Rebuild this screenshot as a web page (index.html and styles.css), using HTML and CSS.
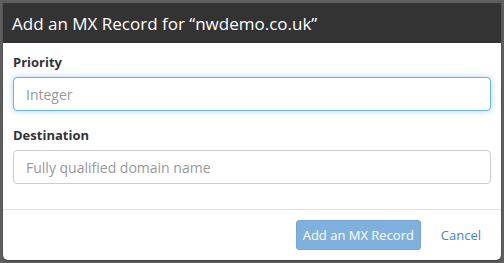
FILE: index.html
```html
<!DOCTYPE html>
<html lang="en">
<head>
    <meta charset="UTF-8">
    <title>Add an MX Record</title>
    <link rel="stylesheet" href="styles.css">
</head>
<body>
<div class="modal">
    <div class="modal-header">
        <h1>Add an MX Record for “nwdemo.co.uk”</h1>
    </div>

    <div class="modal-body">
        <div class="form-group">
            <label for="priority">Priority</label>
            <input id="priority" class="form-control focus" type="text" placeholder="Integer">
        </div>
        <div class="form-group">
            <label for="destination">Destination</label>
            <input id="destination" class="form-control" type="text" placeholder="Fully qualified domain name">
        </div>
    </div>

    <div class="modal-footer">
        <button class="btn btn-primary" disabled>Add an MX Record</button>
        <a class="btn btn-link" href="#">Cancel</a>
    </div>
</div>
</body>
</html>
```

FILE: styles.css
```css
body {
    margin: 0;
    padding: 3px;
    background-color: #5f5f5f;
    font-family: "Open Sans", sans-serif;
    color: #333;
}
.modal {
    width: 498px;
    background-color: #fff;
    border-radius: 0 0 5px 5px;
    overflow: hidden;
    box-shadow: 0 1px 2px rgba(0, 0, 0, 0.4);
}
.modal-header {
    background-color: #333;
    height: 40px;
    padding: 0 9px;
    display: flex;
    align-items: center;
}
.modal-header h1 {
    margin: 0;
    font-size: 17px;
    font-weight: normal;
    color: #fff;
}
.modal-body {
    padding: 10px 10px 10px;
}
.form-group {
    margin-bottom: 15px;
}
.form-group label {
    display: block;
    font-size: 13px;
    font-weight: bold;
    line-height: 18px;
    margin-bottom: 6px;
}
.form-control {
    display: block;
    box-sizing: border-box;
    width: 100%;
    height: 34px;
    padding: 6px 12px;
    font-family: "Open Sans", sans-serif;
    font-size: 14px;
    color: #555;
    border: 1px solid #ccc;
    border-radius: 4px;
    outline: none;
}
.form-control::placeholder {
    color: #999;
}
.form-control.focus {
    border-color: #66afe9;
    box-shadow: 0 0 6px rgba(102, 175, 233, 0.5);
}
.modal-footer {
    border-top: 1px solid #e5e5e5;
    padding: 10px 7px 10px 10px;
    display: flex;
    justify-content: flex-end;
    align-items: center;
    gap: 7px;
}
.btn {
    font-family: "Open Sans", sans-serif;
    font-size: 13px;
    height: 30px;
    padding: 0 12px;
    border-radius: 3px;
    border: 1px solid transparent;
    display: flex;
    align-items: center;
    box-sizing: border-box;
    text-decoration: none;
    white-space: nowrap;
}
.btn-primary {
    background-color: #80b1de;
    border-color: #75a8d8;
    color: #fff;
    width: 125px;
    justify-content: center;
}
.btn-link {
    color: #3a86d4;
}
```
